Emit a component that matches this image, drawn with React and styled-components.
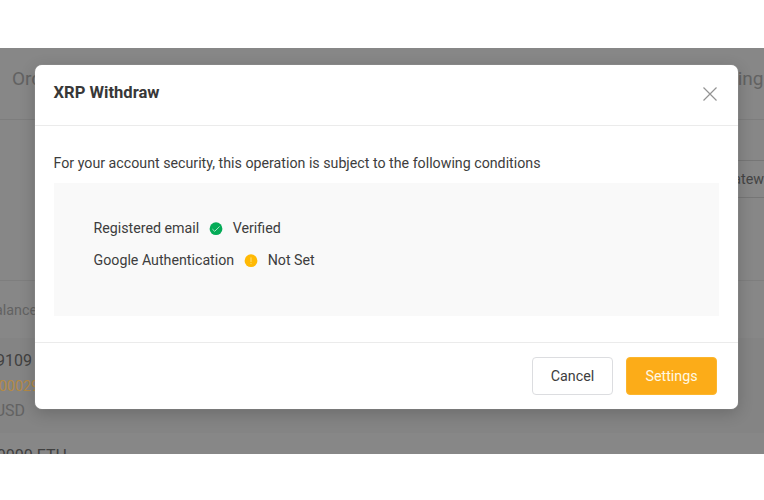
import React from "react";
import styled, { createGlobalStyle } from "styled-components";

const GlobalStyle = createGlobalStyle`
  * { box-sizing: border-box; }
  body { margin: 0; background: #fff; font-family: Roboto, "Liberation Sans", sans-serif; }
`;

const Page = styled.div`
  height: 500px;
  padding: 48px 0 46px;
  background: #fff;
`;

const Stage = styled.main`
  position: relative;
  height: 406px;
  overflow: hidden;
  background: #878787;
`;

const NavBar = styled.header`
  display: flex;
  justify-content: space-between;
  align-items: center;
  height: 72px;
  padding: 0 0.5px 10px 12px;
  border-bottom: 1px solid #7d7d7d;
  font-size: 19px;
  color: #626262;
`;

const FilterBar = styled.section`
  display: flex;
  justify-content: flex-end;
  height: 161px;
  padding-top: 40px;
  border-bottom: 1px solid #7e7e7e;
`;

const Gateway = styled.div`
  display: flex;
  align-items: center;
  justify-content: flex-end;
  width: 130px;
  height: 38px;
  border: solid #767676;
  border-width: 1px 0;
  font-size: 14.3px;
  color: #444;
`;

const TableHead = styled.div`
  display: flex;
  align-items: center;
  justify-content: flex-end;
  width: 37px;
  height: 57px;
  font-size: 14.3px;
  color: #626262;
`;

const TableRow = styled.div`
  height: 95px;
  padding-top: 10px;
  background: ${(p) => (p.$shaded ? "#848484" : "#878787")};
`;

const Amount = styled.div`
  display: flex;
  justify-content: flex-end;
  width: ${(p) => p.$end}px;
  height: 25px;
  line-height: ${(p) => p.$line || 25}px;
  font-size: ${(p) => p.$size || 16}px;
  color: ${(p) => p.$color || "#404040"};
`;

const Dialog = styled.section`
  position: absolute;
  left: 35px;
  top: 17px;
  display: flex;
  flex-direction: column;
  width: 703px;
  height: 344px;
  border-radius: 7px;
  background: #fff;
  box-shadow: 0 4px 16px rgba(0, 0, 0, 0.2), 0 0 1px rgba(255, 255, 255, 0.7);
  font-size: 14.23px;
  color: #3d3d3d;
`;

const DialogHeader = styled.header`
  display: flex;
  justify-content: space-between;
  height: 61px;
  padding: 18px 20px 0 18.5px;
  border-bottom: 1px solid #ebebeb;
`;

const Title = styled.h1`
  margin: 0;
  font-size: 16.6px;
  line-height: 20px;
  font-weight: 700;
  color: #383838;
`;

const CloseButton = styled.button`
  width: 16px;
  height: 16px;
  margin-top: 3px;
  padding: 0;
  border: 0;
  background: none;
  svg { display: block; }
`;

const DialogBody = styled.div`
  flex: 1;
  padding: 27px 19px 0 18.5px;
`;

const Message = styled.p`
  margin: 0 0 10px;
  line-height: 20px;
`;

const Conditions = styled.ul`
  height: 133px;
  margin: 0;
  padding: 29px 40px;
  list-style: none;
  background: #f9f9f9;
`;

const Condition = styled.li`
  display: flex;
  align-items: center;
  height: 32px;
  svg { margin: 1px 10px 0 9.5px; }
`;

const DialogFooter = styled.footer`
  display: flex;
  justify-content: flex-end;
  gap: 13px;
  height: 67px;
  padding: 14px 21px 0;
  border-top: 1px solid #ebebeb;
`;

const Button = styled.button`
  width: ${(p) => (p.$primary ? 91 : 81)}px;
  height: 38px;
  padding: 0;
  border: 1px solid ${(p) => (p.$primary ? "#fcb62d" : "#dcdde0")};
  border-radius: 4px;
  background: ${(p) => (p.$primary ? "#fcac18" : "#fff")};
  color: ${(p) => (p.$primary ? "#fff9e4" : "#3d3d3d")};
  font: 14.3px Roboto, sans-serif;
`;

function CloseIcon() {
  return (
    <svg width="16" height="16" viewBox="0 0 16 16" fill="none" stroke="#939393" strokeWidth="1.2">
      <path d="M1.5 1.5l13 13M14.5 1.5l-13 13" />
    </svg>
  );
}

function VerifiedIcon() {
  return (
    <svg width="14" height="14" viewBox="0 0 14 14" fill="none">
      <circle cx="7" cy="6.7" r="6.4" fill="#04ab57" />
      <path d="M3.4 7.1l2.3 2.2 4.9-4.8" stroke="#a9e5c5" strokeWidth="1" />
    </svg>
  );
}

function WarningIcon() {
  return (
    <svg width="14" height="14" viewBox="0 0 14 14" fill="none">
      <circle cx="7" cy="6.7" r="6.4" fill="#ffb904" />
      <path d="M7 3.4v4.6M7 9.1v1" stroke="#ffdf7a" strokeWidth="1" />
    </svg>
  );
}

export default function App() {
  return (
    <Page>
      <GlobalStyle />
      <Stage>
        <NavBar><span>Ord</span><span>ing</span></NavBar>
        <FilterBar><Gateway>atew</Gateway></FilterBar>
        <TableHead>alance</TableHead>
        <TableRow $shaded>
          <Amount $end={32}>9109</Amount>
          <Amount $end={39} $size={14.3} $line={27} $color="#b58a45">00029</Amount>
          <Amount $end={25} $color="#626262">USD</Amount>
        </TableRow>
        <TableRow><Amount $end={67}>0000&nbsp;ETH</Amount></TableRow>
        <Dialog role="dialog" aria-labelledby="dialog-title">
          <DialogHeader>
            <Title id="dialog-title">XRP Withdraw</Title>
            <CloseButton aria-label="Close"><CloseIcon /></CloseButton>
          </DialogHeader>
          <DialogBody>
            <Message>For your account security, this operation is subject to the following conditions</Message>
            <Conditions>
              <Condition>Registered email<VerifiedIcon />Verified</Condition>
              <Condition>Google Authentication<WarningIcon />Not Set</Condition>
            </Conditions>
          </DialogBody>
          <DialogFooter>
            <Button>Cancel</Button>
            <Button $primary>Settings</Button>
          </DialogFooter>
        </Dialog>
      </Stage>
    </Page>
  );
}
